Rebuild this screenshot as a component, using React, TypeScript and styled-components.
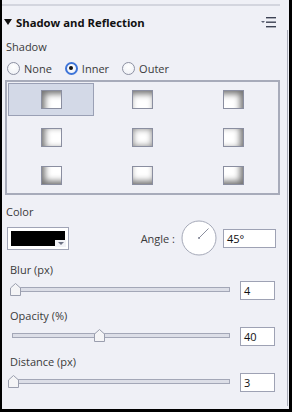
import React from "react";
import styled, { createGlobalStyle } from "styled-components";

const Global = createGlobalStyle`
  html, body { margin: 0; padding: 0; background: #ffffff; }
  * { box-sizing: border-box; }
`;

const Frame = styled.div`
  width: 292px;
  height: 412px;
  background: #eff0f6;
  border-left: 2px solid #000;
  border-right: 3px solid #000;
  border-bottom: 3px solid #000;
  font-family: "Open Sans", "Liberation Sans", sans-serif;
  color: #3a3a3a;
  position: relative;
  overflow: hidden;
`;

const ScrollEdge = styled.div`
  position: absolute;
  top: 30px;
  right: 1px;
  bottom: 3px;
  width: 1px;
  background: #a9acb8;
`;

const Divider = styled.div`
  margin-top: 4px;
  width: 278px;
  height: 2px;
  background: #d3d5de;
`;

const Content = styled.div`
  width: 278px;
  padding-left: 3px;
  display: flex;
  flex-direction: column;
`;

const Header = styled.div`
  margin-top: 6px;
  height: 20px;
  display: flex;
  align-items: center;
  padding-right: 3px;
`;

const Caret = styled.span`
  width: 0;
  height: 0;
  border-left: 4px solid transparent;
  border-right: 4px solid transparent;
  border-top: 6px solid #111;
  margin-left: -1px;
  margin-right: 4px;
`;

const Title = styled.span`
  font-weight: 700;
  font-size: 11.3px;
  color: #111;
  flex: 1;
`;

const Label = styled.div<{ $indent?: number; $top: number }>`
  font-size: 11px;
  line-height: 16px;
  height: 16px;
  margin-top: ${(p) => p.$top}px;
  padding-left: ${(p) => p.$indent ?? 1}px;
  color: #3a3a3a;
`;

const RadioRow = styled.div`
  margin-top: 5px;
  height: 16px;
  display: flex;
  align-items: center;
  padding-left: 2px;
`;

const RadioItem = styled.label`
  display: flex;
  align-items: center;
  gap: 4px;
  font-size: 11px;
  color: #3a3a3a;
  margin-right: 13px;
`;

const RadioCircle = styled.span<{ $checked?: boolean }>`
  width: 13px;
  height: 13px;
  border-radius: 50%;
  background: radial-gradient(circle at 50% 35%, #ffffff, #eceef4);
  border: ${(p) => (p.$checked ? "2px solid #3d74d8" : "1px solid #8d91a2")};
  display: flex;
  align-items: center;
  justify-content: center;
  &::after {
    content: "";
    width: 4px;
    height: 4px;
    border-radius: 50%;
    background: #111;
    display: ${(p) => (p.$checked ? "block" : "none")};
  }
`;

const GridBox = styled.div`
  margin-top: 4px;
  width: 275px;
  border: 2px solid #a7abba;
  padding: 1px;
  display: grid;
  grid-template-columns: repeat(3, 86px);
  grid-auto-rows: 33px;
  column-gap: 5px;
  row-gap: 5px;
`;

const Cell = styled.div<{ $selected?: boolean }>`
  display: flex;
  align-items: center;
  justify-content: center;
  background: ${(p) => (p.$selected ? "#d3d9e7" : "transparent")};
  border: 1px solid ${(p) => (p.$selected ? "#9aa0b5" : "transparent")};
`;

const Swatch = styled.div<{ $dx: number; $dy: number }>`
  width: 21px;
  height: 19px;
  background: #fff;
  border: 1px solid #8a8ea0;
  box-shadow: ${(p) =>
    p.$dx === 0 && p.$dy === 0
      ? "inset 0 0 6px rgba(0,0,0,0.5)"
      : `inset ${p.$dx * 5}px ${p.$dy * 5}px 6px -2px rgba(0,0,0,0.55)`};
`;

const ColorRow = styled.div`
  margin-top: 0px;
  height: 36px;
  display: flex;
  align-items: center;
  padding-left: 2px;
`;

const ColorBox = styled.div`
  position: relative;
  width: 62px;
  height: 23px;
  background: #fff;
  border: 1px solid #a0a4b6;
  padding: 3px;
`;

const ColorFill = styled.div`
  width: 100%;
  height: 100%;
  background: #000;
`;

const DropNotch = styled.div`
  position: absolute;
  right: 2px;
  bottom: 2px;
  width: 11px;
  height: 7px;
  background: #f2f3f7;
  display: flex;
  align-items: center;
  justify-content: center;
  &::after {
    content: "";
    border-left: 3px solid transparent;
    border-right: 3px solid transparent;
    border-top: 3px solid #6e7384;
  }
`;

const AngleLabel = styled.span`
  margin-left: auto;
  font-size: 11px;
  color: #3a3a3a;
  margin-right: 6px;
`;

const Dial = styled.svg`
  width: 36px;
  height: 36px;
  display: block;
`;

const TextBox = styled.div<{ $w: number; $h: number }>`
  width: ${(p) => p.$w}px;
  height: ${(p) => p.$h}px;
  background: #fff;
  border: 1px solid #9ea2b4;
  font-size: 11px;
  color: #111;
  display: flex;
  align-items: center;
  padding-left: 3px;
`;

const AngleInput = styled(TextBox)`
  margin-left: 6px;
  margin-right: 4px;
`;

const SliderRow = styled.div`
  margin-top: 3px;
  height: 19px;
  display: flex;
  align-items: center;
  padding-left: 7px;
`;

const Track = styled.div`
  position: relative;
  width: 218px;
  height: 5px;
  margin-top: -3px;
  background: #dcdee7;
  border: 1px solid #a3a7b7;
  margin-right: 10px;
`;

const Thumb = styled.svg`
  position: absolute;
  top: -5px;
  width: 11px;
  height: 13px;
  margin-left: -5px;
`;

const swatches: [number, number][] = [
  [1, 1], [0, 1], [-1, 1],
  [1, 0], [0, 0], [-1, 0],
  [1, -1], [0, -1], [-1, -1],
];

function Slider({ frac, value }: { frac: number; value: string }) {
  return (
    <SliderRow>
      <Track>
        <Thumb viewBox="0 0 11 13" style={{ left: `${frac * 100}%` }}>
          <path d="M0.5 12.5 V5 L5.5 0.5 L10.5 5 V12.5 Z" fill="#f4f4f6" stroke="#9a9eae" />
        </Thumb>
      </Track>
      <TextBox $w={35} $h={19}>{value}</TextBox>
    </SliderRow>
  );
}

export default function App() {
  return (
    <>
      <Global />
      <Frame>
        <ScrollEdge />
        <Divider />
        <Content>
          <Header>
            <Caret />
            <Title>Shadow and Reflection</Title>
            <svg width="16" height="11" viewBox="0 0 16 11">
              <path d="M0 4 H4 L2 6 Z" fill="#5d6274" />
              <rect x="5" y="0" width="10" height="1.4" fill="#3d4254" />
              <rect x="5" y="4.5" width="10" height="1.4" fill="#3d4254" />
              <rect x="5" y="9" width="10" height="1.4" fill="#3d4254" />
            </svg>
          </Header>
          <Label $top={7}>Shadow</Label>
          <RadioRow>
            <RadioItem><RadioCircle />None</RadioItem>
            <RadioItem><RadioCircle $checked />Inner</RadioItem>
            <RadioItem><RadioCircle />Outer</RadioItem>
          </RadioRow>
          <GridBox>
            {swatches.map(([dx, dy], i) => (
              <Cell key={i} $selected={i === 0}>
                <Swatch $dx={dx} $dy={dy} />
              </Cell>
            ))}
          </GridBox>
          <Label $top={9}>Color</Label>
          <ColorRow>
            <ColorBox>
              <ColorFill />
              <DropNotch />
            </ColorBox>
            <AngleLabel>Angle :</AngleLabel>
            <Dial viewBox="0 0 36 36">
              <circle cx="18" cy="18" r="17" fill="#fff" stroke="#a5a9b8" />
              <line x1="18" y1="18" x2="27.5" y2="8.5" stroke="#8a8e9e" strokeWidth="1" />
              <circle cx="18" cy="18" r="1" fill="#7d8192" />
            </Dial>
            <AngleInput $w={53} $h={19}>45°</AngleInput>
          </ColorRow>
          <Label $top={6} $indent={5}>Blur (px)</Label>
          <Slider frac={0.01} value="4" />
          <Label $top={8} $indent={5}>Opacity (%)</Label>
          <Slider frac={0.4} value="40" />
          <Label $top={8} $indent={5}>Distance (px)</Label>
          <Slider frac={0} value="3" />
        </Content>
      </Frame>
    </>
  );
}
